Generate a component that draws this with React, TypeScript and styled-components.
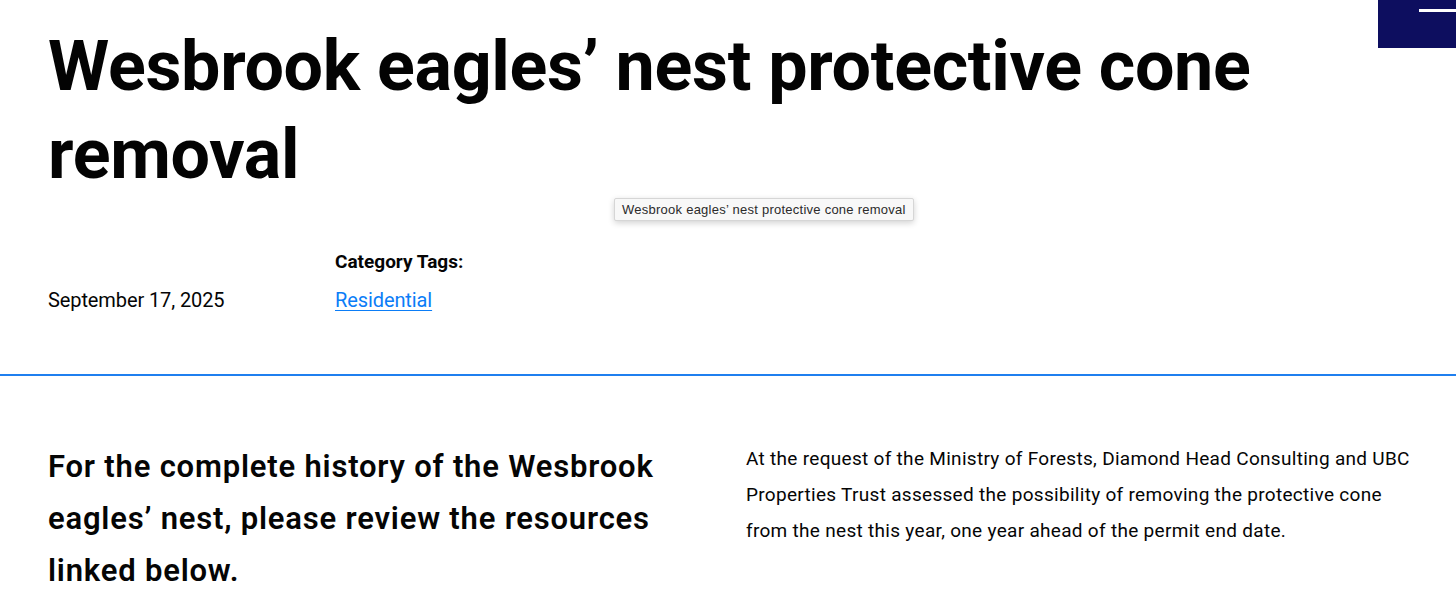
import * as React from "react";
import styled, { createGlobalStyle } from "styled-components";

const GlobalStyle = createGlobalStyle`
  html, body {
    margin: 0;
    padding: 0;
    background: #ffffff;
  }
  body {
    font-family: Roboto, "Noto Sans", Arial, sans-serif;
    color: #050505;
  }
`;

const Page = styled.div`
  position: relative;
  min-height: 591px;
  overflow: hidden;
`;

const MenuButton = styled.button`
  position: absolute;
  top: 0;
  right: 0;
  width: 78px;
  height: 48px;
  border: none;
  padding: 0;
  background: #0d0e5f;
  cursor: pointer;

  span {
    position: absolute;
    top: 9px;
    left: 41px;
    right: 0;
    height: 3px;
    background: #ffffff;
  }
`;

const Header = styled.header`
  padding: 22px 48px 0;
`;

const Title = styled.h1`
  margin: 0;
  max-width: 1300px;
  font-size: 70px;
  font-weight: 700;
  line-height: 88px;
  letter-spacing: -0.3px;
  color: #030303;
`;

const Tooltip = styled.div`
  position: absolute;
  top: 198px;
  left: 614px;
  height: 23px;
  padding: 0 7px;
  display: flex;
  align-items: center;
  box-sizing: border-box;
  font-family: "Liberation Sans", Arial, sans-serif;
  font-size: 13px;
  letter-spacing: 0.25px;
  color: #2b2b2b;
  background: #f8f8f8;
  border: 1px solid #d6d6d6;
  border-radius: 2px;
  box-shadow: 0 2px 6px rgba(0, 0, 0, 0.18);
  white-space: nowrap;
`;

const Meta = styled.div`
  display: grid;
  grid-template-columns: 287px auto;
  align-items: end;
  margin-top: 50px;
  padding-bottom: 59px;
`;

const MetaDate = styled.time`
  font-size: 20px;
  line-height: 30px;
  letter-spacing: -0.1px;
`;

const TagGroup = styled.div`
  display: flex;
  flex-direction: column;
  align-items: flex-start;
`;

const TagLabel = styled.h4`
  margin: 0 0 9px;
  font-size: 19px;
  font-weight: 700;
  line-height: 28px;
  letter-spacing: 0;
`;

const TagLink = styled.a`
  font-size: 20px;
  line-height: 30px;
  letter-spacing: -0.1px;
  color: #0b7df7;
  text-decoration: underline;
  text-underline-offset: 3px;
  text-decoration-thickness: 1px;
`;

const Divider = styled.hr`
  margin: 0;
  border: none;
  height: 2px;
  background: #1f7fef;
`;

const Content = styled.section`
  display: grid;
  grid-template-columns: 662px 1fr;
  column-gap: 36px;
  padding: 65px 44px 0 48px;
`;

const Lead = styled.p`
  margin: 0;
  font-size: 31px;
  font-weight: 600;
  line-height: 52px;
  letter-spacing: 0.8px;
`;

const Body = styled.p`
  margin: 0;
  font-size: 19px;
  line-height: 36px;
  letter-spacing: 0.3px;
`;

export default function App() {
  return (
    <Page>
      <GlobalStyle />
      <MenuButton aria-label="Menu">
        <span />
      </MenuButton>
      <Header>
        <Title>Wesbrook eagles’ nest protective cone removal</Title>
        <Meta>
          <MetaDate>September 17, 2025</MetaDate>
          <TagGroup>
            <TagLabel>Category Tags:</TagLabel>
            <TagLink href="#">Residential</TagLink>
          </TagGroup>
        </Meta>
      </Header>
      <Tooltip>Wesbrook eagles’ nest protective cone removal</Tooltip>
      <Divider />
      <Content>
        <Lead>
          For the complete history of the Wesbrook eagles’ nest, please review
          the resources linked below.
        </Lead>
        <Body>
          At the request of the Ministry of Forests, Diamond Head Consulting and
          UBC Properties Trust assessed the possibility of removing the
          protective cone from the nest this year, one year ahead of the permit
          end date.
        </Body>
      </Content>
    </Page>
  );
}
